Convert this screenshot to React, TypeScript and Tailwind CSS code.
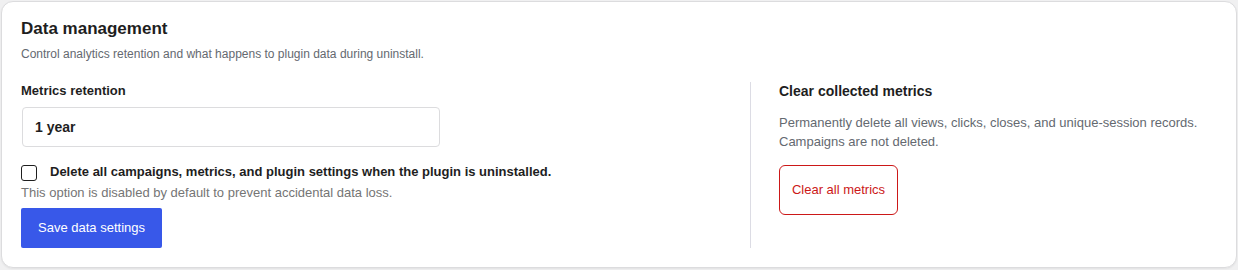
import React from "react";

export default function App() {
  return (
    <div
      className="h-[270px] w-[1238px] bg-[#f0f0f1] pt-px pl-px pr-px"
      style={{ fontFamily: '"Liberation Sans", Arial, sans-serif' }}
    >
      <div className="h-[267px] rounded-[12px] border border-[#dcdcde] bg-white pt-[16px] pl-[19px] pr-[19px] shadow-[0_1px_2px_rgba(0,0,0,0.06)]">
        <h2 className="text-[17px] leading-[22px] font-bold text-[#1e1e1e]">Data management</h2>
        <p className="mt-[5px] text-[12px] leading-[18px] text-[#646970]">
          Control analytics retention and what happens to plugin data during uninstall.
        </p>
        <div className="mt-[19px] flex">
          <div className="flex-1 pr-[28px]">
            <div className="text-[13px] leading-[18px] font-bold text-[#1e1e1e]">Metrics retention</div>
            <div className="mt-[7px] ml-px flex h-[40px] w-[418px] items-center rounded-[4px] border border-[#dcdcde] pl-[12px] text-[14px] font-bold text-[#1e1e1e]">
              1 year
            </div>
            <label className="mt-[16px] flex items-start gap-[13px]">
              <span className="mt-[2px] block h-[16px] w-[16px] shrink-0 rounded-[3px] border-[1.5px] border-[#1e1e1e] bg-white" />
              <span className="text-[13px] leading-[18px] font-bold text-[#1e1e1e]">
                Delete all campaigns, metrics, and plugin settings when the plugin is uninstalled.
              </span>
            </label>
            <p className="mt-[3px] text-[13px] leading-[18px] text-[#757575]">
              This option is disabled by default to prevent accidental data loss.
            </p>
            <button className="mt-[6px] flex h-[40px] w-[141px] items-center justify-center rounded-[2px] bg-[#3858e9] text-[13px] text-white">
              Save data settings
            </button>
          </div>
          <div className="w-[467px] border-l border-[#dcdce4] pl-[28px]">
            <h3 className="text-[14px] leading-[18px] font-bold text-[#1e1e1e]">Clear collected metrics</h3>
            <p className="mt-[13px] text-[13px] leading-[19px] text-[#646970]">
              Permanently delete all views, clicks, closes, and unique-session records. Campaigns are not deleted.
            </p>
            <button className="mt-[14px] flex h-[50px] w-[119px] items-center justify-center rounded-[6px] border border-[#cc1818] bg-white text-[13px] text-[#cc1818]">
              Clear all metrics
            </button>
          </div>
        </div>
      </div>
    </div>
  );
}
